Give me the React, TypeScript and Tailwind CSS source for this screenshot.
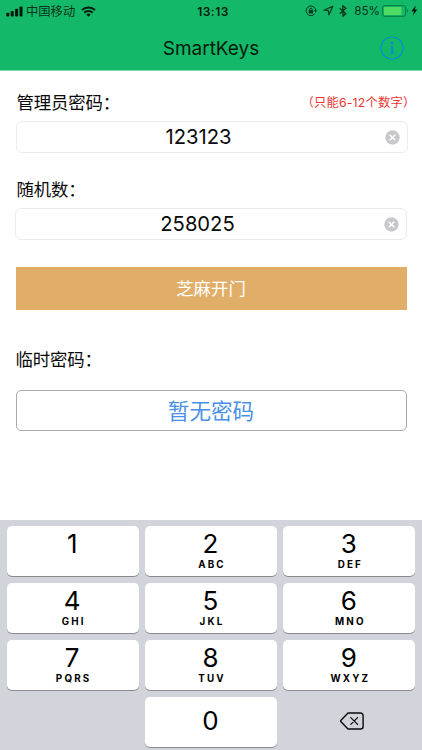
import type { ReactNode } from "react";

const keys = [
  { digit: "1", letters: "" },
  { digit: "2", letters: "ABC" },
  { digit: "3", letters: "DEF" },
  { digit: "4", letters: "GHI" },
  { digit: "5", letters: "JKL" },
  { digit: "6", letters: "MNO" },
  { digit: "7", letters: "PQRS" },
  { digit: "8", letters: "TUV" },
  { digit: "9", letters: "WXYZ" },
];

const StatusBar = () => (
  <div className="flex h-[22px] items-center justify-between pl-[6px] pr-[4px] text-[12px] text-[#06331c]">
    <div className="flex w-[150px] items-center">
      <svg width="17" height="11" viewBox="0 0 17 11" fill="#03180d">
        <rect x="0.3" y="6.8" width="3" height="3.8" rx="0.8" />
        <rect x="4.7" y="5" width="3" height="5.6" rx="0.8" />
        <rect x="9.1" y="2.8" width="3" height="7.8" rx="0.8" />
        <rect x="13.5" y="0.4" width="3" height="10.2" rx="0.8" />
      </svg>
      <span className="ml-[3px] pt-[2px] text-[12.3px]">中国移动</span>
      <svg className="ml-[6px]" width="15" height="11" viewBox="0 0 15 11" fill="none" stroke="#03180d" strokeWidth="2">
        <path d="M0.9 4.1a9.4 9.4 0 0 1 13.2 0" />
        <path d="M3.3 6.7a6 6 0 0 1 8.4 0" />
        <path d="M7.5 10.8 5.3 8.5a3.1 3.1 0 0 1 4.4 0z" fill="#03180d" stroke="none" />
      </svg>
    </div>
    <span className="pt-[1px] pl-[2px] text-[12px] font-semibold tracking-[0.5px] text-[#03180d]">13:13</span>
    <div className="flex w-[150px] items-center justify-end">
      {/* Orientation lock */}
      <svg className="shrink-0" width="12" height="12" viewBox="0 0 12 12" fill="none" stroke="#06331c" strokeWidth="1">
        <path d="M9.7 8.7A4.8 4.8 0 1 1 10.7 6" />
        <path d="M9 5.6h3.2L10.7 7.6z" fill="#06331c" stroke="none" />
        <rect x="3.7" y="5.2" width="4.4" height="3.2" fill="#06331c" stroke="none" />
        <path d="M4.7 5.4V4.4a1.2 1.2 0 0 1 2.4 0v1" />
      </svg>
      {/* Location */}
      <svg className="ml-[6px] shrink-0" width="11" height="11" viewBox="0 0 11 11" fill="none" stroke="#06331c" strokeWidth="1.1" strokeLinejoin="round">
        <path d="M9.8 1.2 1 5.2l4.3.4.6 4.4z" />
      </svg>
      {/* Bluetooth */}
      <svg className="ml-[5px] shrink-0" width="8" height="12" viewBox="0 0 8 12" fill="none" stroke="#06331c" strokeWidth="1.3">
        <path d="M0.8 3.3 6.8 8.7 3.9 11.2V0.8L6.8 3.3 0.8 8.7" />
      </svg>
      <span className="ml-[7px] pt-[1px] text-[11.7px]">85%</span>
      <svg className="ml-[2px] shrink-0" width="27" height="12" viewBox="0 0 27 12" fill="none">
        <rect x="0.6" y="0.7" width="23" height="10.6" rx="2.2" stroke="#087a40" />
        <rect x="2" y="2" width="17.5" height="8" rx="0.8" fill="#4fdb64" />
        <path d="M25 4.2c1.4.5 1.4 3.1 0 3.6z" fill="#087a40" />
      </svg>
      <svg className="ml-[2px] shrink-0" width="7" height="11" viewBox="0 0 7 11" fill="#03180d">
        <path d="M4.8 0.4 0.4 6.2h2.5L1.9 10.6l4.5-6H3.9z" />
      </svg>
    </div>
  </div>
);

const ClearIcon = () => (
  <svg width="15" height="15" viewBox="0 0 15 15">
    <circle cx="7.5" cy="7.5" r="7.2" fill="#c8c8cb" />
    <path d="M4.7 4.7l5.6 5.6M10.3 4.7l-5.6 5.6" stroke="#fff" strokeWidth="1.5" />
  </svg>
);

const Field = ({ children }: { children: ReactNode }) => (
  <div className="flex h-8 items-center rounded-[6px] border border-[#ececec] bg-white pr-[7px]">
    <span className="flex-1 pr-[5px] text-center text-[20.2px] leading-none text-[#0a0a0a]">{children}</span>
    <ClearIcon />
  </div>
);

const Keypad = () => (
  <div className="grid grid-cols-3 gap-x-[6px] gap-y-[7px] bg-[#d1d4db] px-[6.5px] pt-[6px] pb-[3px]">
    {keys.map((key) => (
      <div
        key={key.digit}
        className="flex h-[50px] flex-col items-center rounded-[5px] bg-white pt-[4px] text-black shadow-[0_1px_0_#898b8f]"
      >
        <span className="pr-[1px] text-[26px] leading-[28px]">{key.digit}</span>
        <span className="mt-[1px] pl-[2px] text-[9.8px] leading-[11px] font-bold tracking-[2.2px]">{key.letters}</span>
      </div>
    ))}
    <div />
    <div className="flex h-[50px] items-center justify-center rounded-[5px] bg-white pr-[1px] pb-[2px] text-[26px] leading-none text-black shadow-[0_1px_0_#898b8f]">
      0
    </div>
    <div className="flex h-[50px] items-center justify-center pb-[3px]">
      <svg className="ml-[6px]" width="24" height="18" viewBox="0 0 24 18" fill="none" stroke="#0a0a0a" strokeWidth="1.4" strokeLinejoin="round">
        <path d="M8 1h12.5a2.6 2.6 0 0 1 2.6 2.6v10.8a2.6 2.6 0 0 1-2.6 2.6H8L1 9.8a1.1 1.1 0 0 1 0-1.6z" />
        <path d="M10.8 5.6l6.8 6.8M17.6 5.6l-6.8 6.8" strokeWidth="1.2" strokeLinecap="round" />
      </svg>
    </div>
  </div>
);

const App = () => {
  return (
    <div className="flex h-[750px] w-[422px] flex-col overflow-hidden bg-white font-['Inter','Noto_Sans_CJK_SC',sans-serif]">
      <header className="h-[71px] border-b border-[#7fd8aa] bg-[#13b968]">
        <StatusBar />
        <div className="grid h-[48px] grid-cols-[1fr_auto_1fr] items-center pb-[1px]">
          <span />
          <h1 className="pt-[6px] text-[19px] leading-none text-[#031a0d]">SmartKeys</h1>
          <svg className="mt-[4px] mr-[18px] justify-self-end" width="24" height="24" viewBox="0 0 24 24" fill="none" stroke="#0d8fc4">
            <circle cx="12" cy="12" r="11" strokeWidth="1.2" />
            <circle cx="12" cy="7" r="1.6" fill="#0d8fc4" stroke="none" />
            <path d="M12.2 10v7.6" strokeWidth="2.4" />
            <path d="M10 10.4h2.4M9.8 17.4h4.6" strokeWidth="1" />
          </svg>
        </div>
      </header>

      <main className="flex-1 text-[17.4px] text-[#0a0a0a]">
        <div className="flex h-[50px] items-center justify-between pt-[15px] pr-[6.5px] pl-[16.5px]">
          <label className="tracking-[-0.15px]">管理员密码：</label>
          <span className="text-[12.3px] tracking-[0.2px] text-[#e8352f]">（只能6-12个数字）</span>
        </div>
        <div className="pr-[14px] pl-4">
          <Field>123123</Field>
        </div>
        <div className="flex h-[55px] items-center pt-[20px] pl-[16.5px]">
          <label className="tracking-[-0.15px]">随机数：</label>
        </div>
        <div className="px-[15px]">
          <Field>258025</Field>
        </div>

        <div className="px-[15.5px] pt-[27px]">
          <button className="flex h-[43px] w-full items-center justify-center bg-[#e1ae6a] pt-[2px] text-[17.4px] text-white">
            芝麻开门
          </button>
          <div className="flex h-[80px] items-center pt-[20px]">
            <label className="tracking-[-0.15px]">临时密码：</label>
          </div>
          <div className="flex h-[41px] items-center justify-center rounded-[5px] border border-[#aaaaaa] pt-[1px] text-[21.6px] text-[#4990e8]">
            暂无密码
          </div>
        </div>
      </main>

      <Keypad />
    </div>
  );
};

export default App;
